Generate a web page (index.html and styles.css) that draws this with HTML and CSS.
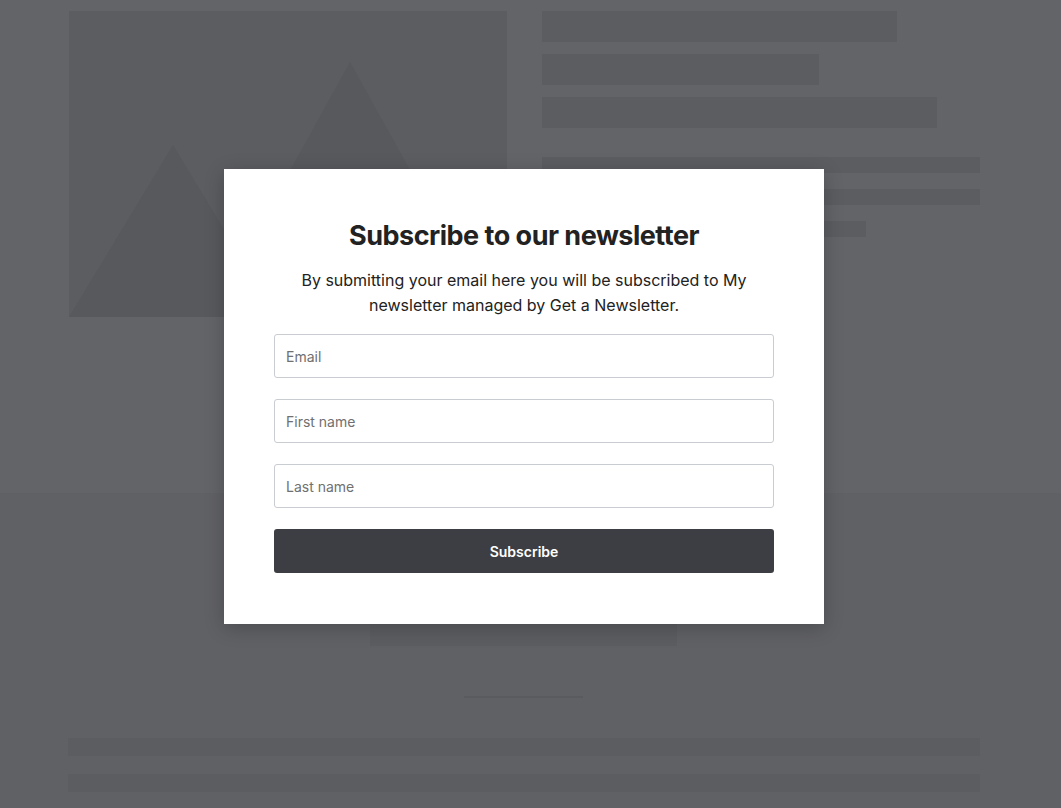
FILE: index.html
```html
<!DOCTYPE html>
<html lang="en">
<head>
<meta charset="utf-8">
<title>Subscribe to our newsletter</title>
<link rel="stylesheet" href="styles.css">
</head>
<body>
<div class="page">
  <section class="top">
    <div class="hero-img">
      <svg class="hero-svg" viewBox="0 0 438 306" width="438" height="306" preserveAspectRatio="none">
        <polygon points="281,51 140,306 423,306" fill="#58595d"/>
        <polygon points="104,134 0,306 208,306" fill="#58595d"/>
      </svg>
    </div>
    <div class="text-col">
      <div class="bar bar-lg w1"></div>
      <div class="bar bar-lg w2"></div>
      <div class="bar bar-lg w3"></div>
      <div class="lines">
        <div class="bar bar-sm w4"></div>
        <div class="bar bar-sm w4"></div>
        <div class="bar bar-sm w5"></div>
      </div>
    </div>
  </section>
  <section class="bottom">
    <div class="cta-box"></div>
    <div class="divider"></div>
    <div class="bar bar-foot"></div>
    <div class="bar bar-foot"></div>
  </section>
</div>

<div class="modal">
  <h1 class="modal-title">Subscribe to our newsletter</h1>
  <p class="modal-text">By submitting your email here you will be subscribed to My newsletter managed by Get a Newsletter.</p>
  <form class="modal-form">
    <input class="field" type="email" placeholder="Email">
    <input class="field" type="text" placeholder="First name">
    <input class="field" type="text" placeholder="Last name">
    <button class="btn" type="button">Subscribe</button>
  </form>
</div>
</body>
</html>
```

FILE: styles.css
```css
html, body {
  margin: 0;
  padding: 0;
}
body {
  background: #636468;
  font-family: Inter, "Noto Sans", Arial, sans-serif;
  width: 1061px;
  height: 808px;
  overflow: hidden;
}
.page {
  display: flex;
  flex-direction: column;
}
.top {
  height: 493px;
  box-sizing: border-box;
  padding: 11px 0 0 69px;
  display: flex;
  gap: 35px;
  align-items: flex-start;
}
.hero-img {
  width: 438px;
  height: 306px;
  background: #5c5d61;
}
.hero-svg {
  display: block;
}
.text-col {
  width: 438px;
  display: flex;
  flex-direction: column;
}
.bar {
  background: #5c5d61;
}
.bar-lg {
  height: 31px;
  margin-bottom: 12px;
}
.w1 { width: 355px; }
.w2 { width: 277px; }
.w3 { width: 395px; }
.lines {
  margin-top: 17px;
  display: flex;
  flex-direction: column;
  gap: 16px;
}
.bar-sm {
  height: 16px;
}
.w4 { width: 438px; }
.w5 { width: 324px; }
.bottom {
  background: #606165;
  height: 315px;
  display: flex;
  flex-direction: column;
  align-items: center;
  padding-top: 97px;
  box-sizing: border-box;
}
.cta-box {
  width: 307px;
  height: 56px;
  background: #5c5d61;
  margin-left: -14px;
}
.divider {
  width: 119px;
  height: 2px;
  background: #5a5b5f;
  margin-top: 50px;
  margin-left: -14px;
}
.bar-foot {
  align-self: flex-start;
  margin-left: 68px;
  width: 912px;
  height: 18px;
}
.divider + .bar-foot {
  margin-top: 40px;
}
.bar-foot + .bar-foot {
  margin-top: 18px;
}

.modal {
  position: absolute;
  left: 224px;
  top: 169px;
  width: 600px;
  box-sizing: border-box;
  padding: 51px 50px 51px;
  background: #ffffff;
  box-shadow: 0 4px 18px rgba(0, 0, 0, 0.22);
  text-align: center;
}
.modal-title {
  margin: 0;
  font-size: 27px;
  line-height: 32px;
  font-weight: 700;
  letter-spacing: -0.5px;
  color: #222222;
}
.modal-text {
  margin: 16px 0 16px;
  font-size: 16px;
  line-height: 25px;
  color: #222222;
}
.modal-form {
  display: flex;
  flex-direction: column;
  gap: 21px;
}
.field {
  display: block;
  width: 100%;
  height: 44px;
  box-sizing: border-box;
  border: 1px solid #c9ccd1;
  border-radius: 3px;
  padding: 0 11px;
  font-family: Inter, "Noto Sans", Arial, sans-serif;
  font-size: 14px;
  color: #222;
  background: #fff;
  outline: none;
}
.field::placeholder {
  color: #707070;
}
.btn {
  display: block;
  width: 100%;
  height: 44px;
  border: none;
  border-radius: 3px;
  background: #3d3e43;
  color: #ffffff;
  font-family: Inter, "Noto Sans", Arial, sans-serif;
  font-size: 14px;
  font-weight: 600;
  cursor: pointer;
}
```
